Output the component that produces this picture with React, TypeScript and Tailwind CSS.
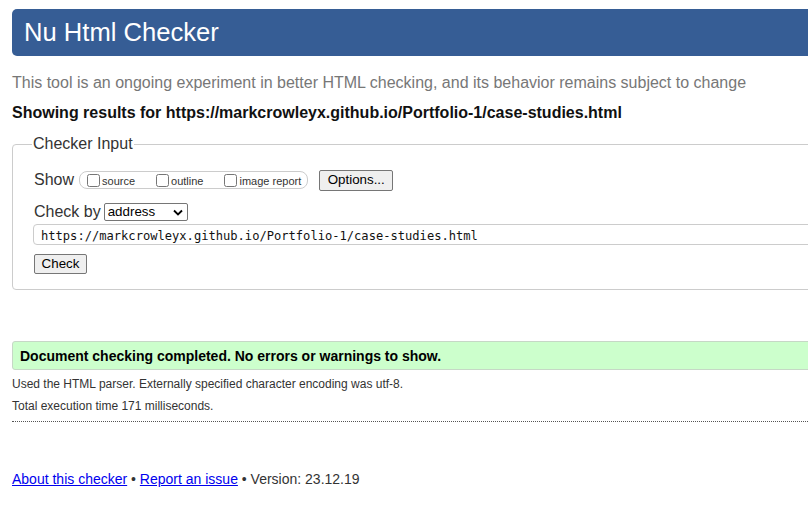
import React from 'react';

const URL = 'https://markcrowleyx.github.io/Portfolio-1/case-studies.html';

function Box({ label }: { label: string }) {
  return (
    <label className="flex items-center">
      <input type="checkbox" className="m-0 h-[13px] w-[13px]" />
      <span className="ml-[2px] pt-[2px] text-[11px] leading-none text-[#333]">{label}</span>
    </label>
  );
}

export default function App() {
  return (
    <div
      className="h-[511px] w-[808px] overflow-hidden bg-white text-[#222]"
      style={{ fontFamily: '"Liberation Sans", Arial, sans-serif' }}
    >
      <div className="w-[1000px] pl-3 pt-[9px]">
        {/* Header */}
        <header className="flex h-[47px] items-center rounded-[5px] bg-[#365d95] pl-3">
          <h1 className="text-[25.6px] leading-none font-normal text-white">Nu Html Checker</h1>
        </header>

        <p className="mt-[17px] text-[16px] leading-[20px] text-[#777]">
          This tool is an ongoing experiment in better HTML checking, and its behavior remains subject to change
        </p>
        <p className="mt-[10px] text-[16px] leading-[20px] font-bold text-[#111]">
          Showing results for {URL}
        </p>

        {/* Checker input */}
        <fieldset className="mt-[12px] rounded-[4px] border border-[#ccc] pb-[14px] pl-[21px]">
          <legend className="-ml-[2px] px-px text-[16px] leading-[18px] text-[#333]">Checker Input</legend>

          <div className="mt-[16px] flex h-[22px] items-center">
            <span className="text-[16px] leading-none text-[#333]">Show</span>
            <div className="ml-[5px] flex h-[18px] items-center gap-[21px] rounded-[8px] border border-[#ccc] pl-[7px] pr-[6px]">
              <Box label="source" />
              <Box label="outline" />
              <Box label="image report" />
            </div>
            <button className="ml-[11px] h-[21px] w-[74px] rounded-[2px] border border-[#767676] bg-[#efefef] text-[13.33px] leading-none text-black">
              Options...
            </button>
          </div>

          <div className="mt-[11px] flex h-[20px] items-center">
            <span className="text-[16px] leading-none text-[#333]">Check by</span>
            <div className="ml-[3px] flex h-[18px] w-[84px] items-center justify-between rounded-[2px] border border-[#767676] pl-[3px] pr-[4px]">
              <span className="text-[13.33px] leading-none text-black">address</span>
              <svg width="10" height="7" viewBox="0 0 10 7" fill="none">
                <path d="M1 1.5l4 4 4-4" stroke="#000" strokeWidth="1.8" />
              </svg>
            </div>
          </div>

          <div className="-ml-[1px] mt-[2px] flex h-[21px] items-center rounded-[4px] border border-[#ccc] pl-[7px] pt-[3px]">
            <span
              className="text-[12.1px] leading-none text-[#111]"
              style={{ fontFamily: '"DejaVu Sans Mono", "Liberation Mono", monospace' }}
            >
              {URL}
            </span>
          </div>

          <button className="mt-[9px] h-[20px] w-[53px] rounded-[2px] border border-[#767676] bg-[#efefef] text-[13.33px] leading-none text-black">
            Check
          </button>
        </fieldset>

        {/* Result */}
        <div className="mt-[51px] flex h-[29px] items-center rounded-[3px] border border-[#c6d8c6] bg-[#ccffcc] pl-[7px]">
          <p className="text-[14px] leading-none font-bold text-black">
            Document checking completed. No errors or warnings to show.
          </p>
        </div>

        <p className="mt-[6px] text-[12px] leading-[16px] text-[#333]">
          Used the HTML parser. Externally specified character encoding was utf-8.
        </p>
        <p className="mt-[6px] text-[12px] leading-[16px] text-[#333]">Total execution time 171 milliseconds.</p>
        <div className="mt-[7px] border-t border-dotted border-[#555]" />

        {/* Footer */}
        <p className="mt-[49px] text-[14px] leading-[16px] text-[#333]">
          <a href="#" className="text-[#0000ee] underline">About this checker</a>
          {' • '}
          <a href="#" className="text-[#0000ee] underline">Report an issue</a>
          {' • Version: 23.12.19'}
        </p>
      </div>
    </div>
  );
}
